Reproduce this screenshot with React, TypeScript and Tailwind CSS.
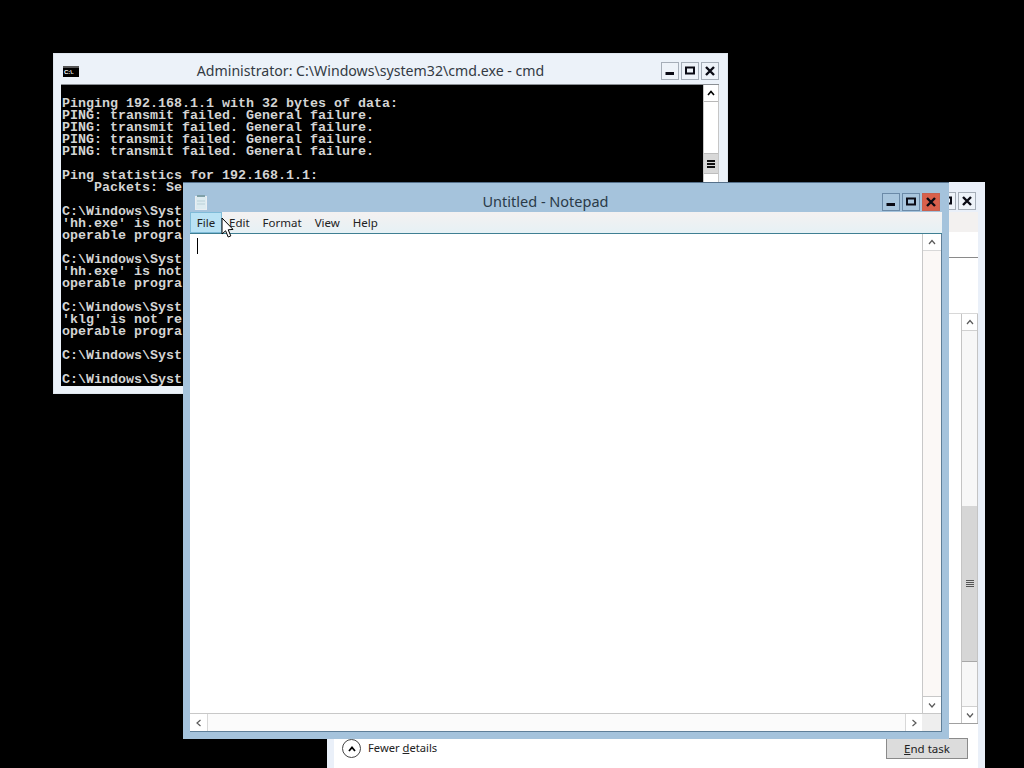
import React from "react";

const CONSOLE_LINES = [
  "Pinging 192.168.1.1 with 32 bytes of data:",
  "PING: transmit failed. General failure.",
  "PING: transmit failed. General failure.",
  "PING: transmit failed. General failure.",
  "PING: transmit failed. General failure.",
  "",
  "Ping statistics for 192.168.1.1:",
  "    Packets: Se",
  "",
  "C:\\Windows\\Syst",
  "'hh.exe' is not",
  "operable progra",
  "",
  "C:\\Windows\\Syst",
  "'hh.exe' is not",
  "operable progra",
  "",
  "C:\\Windows\\Syst",
  "'klg' is not re",
  "operable progra",
  "",
  "C:\\Windows\\Syst",
  "",
  "C:\\Windows\\Syst",
];

function Glyph({ kind, className = "text-[#0a0a14]" }: { kind: "min" | "max" | "close"; className?: string }) {
  return (
    <svg width="12" height="12" viewBox="0 0 12 12" className={className}>
      {kind === "min" && <rect x="1.5" y="7" width="8.5" height="3" fill="currentColor" />}
      {kind === "max" && <rect x="2" y="2.5" width="8" height="6" fill="none" stroke="currentColor" strokeWidth="2" />}
      {kind === "close" && <path d="M2 2 L10 10 M10 2 L2 10" stroke="currentColor" strokeWidth="2.4" fill="none" />}
    </svg>
  );
}

function CaptionButton({ kind, tone }: { kind: "min" | "max" | "close"; tone: "light" | "blue" | "red" }) {
  const toneClass =
    tone === "light"
      ? "border-[#a6aeb8] bg-[#eef3f9]"
      : tone === "blue"
      ? "border-[#6b8aa8] bg-[#a9c6de]"
      : "border-[#c8604f] bg-[#d9604c]";
  return (
    <div className={`flex h-[18px] w-[18px] items-center justify-center border ${toneClass}`}>
      <Glyph kind={kind} />
    </div>
  );
}

function Chevron({ dir, className = "text-[#5a5a5a]", weight = 1.2 }: { dir: "up" | "down" | "left" | "right"; className?: string; weight?: number }) {
  const d = {
    up: "M2 7 L5 3.5 L8 7",
    down: "M2 3.5 L5 7 L8 3.5",
    left: "M6.5 2 L3 5 L6.5 8",
    right: "M3.5 2 L7 5 L3.5 8",
  }[dir];
  return (
    <svg width="10" height="10" viewBox="0 0 10 10" className={className}>
      <path d={d} fill="none" stroke="currentColor" strokeWidth={weight} />
    </svg>
  );
}

function Grip() {
  return (
    <div className="flex flex-col gap-[1px]">
      <div className="h-[1px] w-[8px] bg-current" />
      <div className="h-[1px] w-[8px] bg-current" />
      <div className="h-[1px] w-[8px] bg-current" />
      <div className="h-[1px] w-[8px] bg-current" />
    </div>
  );
}

function HeavyGrip() {
  return (
    <div className="flex flex-col gap-[1px]">
      <div className="h-[2px] w-[8px] bg-[#111]" />
      <div className="h-[2px] w-[8px] bg-[#111]" />
      <div className="h-[2px] w-[8px] bg-[#111]" />
    </div>
  );
}

function CmdWindow() {
  return (
    <div className="absolute left-[53px] top-[53px] flex h-[341px] w-[675px] flex-col border border-[#dfe6ee] bg-[#ecf2f9] pb-[7px] pl-[7px] pr-[8px]">
      <div className="flex h-[30px] shrink-0 items-center pt-[4px]">
        <div className="ml-[2px] flex h-[11px] w-[16px] items-center overflow-hidden border-t-2 border-[#555] bg-black pl-[1px] font-['Liberation_Sans',sans-serif] text-[6px] font-bold leading-none text-white">
          C:\.
        </div>
        <div className="flex-1 pl-[1px] text-center font-['Noto_Sans',sans-serif] text-[14.15px] text-[#333a44]">
          Administrator: C:\Windows\system32\cmd.exe - cmd
        </div>
        <div className="flex gap-[2px]">
          <CaptionButton kind="min" tone="light" />
          <CaptionButton kind="max" tone="light" />
          <CaptionButton kind="close" tone="light" />
        </div>
      </div>
      <div className="flex min-h-0 flex-1 border-t border-[#8b8f94]">
        <div className="min-w-0 flex-1 overflow-hidden bg-black pl-[1px] pt-[13px] font-['Liberation_Mono',monospace] text-[13.33px] font-bold leading-[12px] text-[#d4d4d4]">
          {CONSOLE_LINES.map((line, i) =>
            line ? (
              <div key={i} className="h-[12px] w-fit whitespace-pre">
                {line}
              </div>
            ) : (
              <div key={i} className="h-[12px]" />
            )
          )}
        </div>
        <div className="flex w-[16px] shrink-0 flex-col border-x border-[#c6c6c6] bg-white">
          <div className="flex h-[17px] items-center justify-center border-b border-[#b8b8b8]">
            <Chevron dir="up" className="text-black" weight={1.6} />
          </div>
          <div className="mt-[51px] flex h-[21px] items-center justify-center border-y border-[#bdbdbd] bg-[#d8d8d8]">
            <HeavyGrip />
          </div>
        </div>
      </div>
    </div>
  );
}

function TaskManagerWindow() {
  return (
    <div className="absolute left-[327px] top-[182px] flex h-[586px] w-[658px] flex-col bg-[#eaf0f9] px-[7px] font-['Noto_Sans',sans-serif]">
      <div className="flex h-[30px] shrink-0 justify-end gap-[2px] pr-[2px] pt-[10px]">
        <CaptionButton kind="max" tone="light" />
        <CaptionButton kind="close" tone="light" />
      </div>
      <div className="h-[20px] shrink-0 bg-[#f3f1f0]" />
      <div className="h-[26px] shrink-0 border-b border-[#8a8a8a] bg-white" />
      <div className="flex min-h-0 flex-1 flex-col bg-white">
        <div className="flex min-h-0 flex-1 flex-col border-b border-[#a0a0a0]">
          <div className="h-[56px] shrink-0 border-b border-[#d8d8d8]" />
          <div className="flex min-h-0 flex-1 justify-end">
            <div className="flex w-[17px] flex-col border-x border-[#c4c4c4] bg-[#f7f7f7]">
              <div className="flex h-[17px] items-center justify-center border-b border-[#d0d0d0] bg-white">
                <Chevron dir="up" />
              </div>
              <div className="mt-[175px] flex h-[156px] items-center justify-center border-b border-[#a8a8a8] bg-[#d6d6d6] text-[#555]">
                <Grip />
              </div>
              <div className="flex-1" />
              <div className="flex h-[17px] items-center justify-center border-t border-[#d0d0d0] bg-white">
                <Chevron dir="down" />
              </div>
            </div>
          </div>
        </div>
        <div className="flex h-[44px] shrink-0 items-center justify-between pl-[8px] pr-[10px] pt-[5px]">
          <div className="flex items-center gap-[7px]">
            <div className="flex h-[19px] w-[19px] items-center justify-center rounded-full border border-[#444]">
              <Chevron dir="up" className="text-black" weight={1.8} />
            </div>
            <span className="text-[11.2px] text-[#222]">
              Fewer <span className="underline">d</span>etails
            </span>
          </div>
          <div className="flex h-[21px] w-[82px] items-center justify-center border border-[#8a8a8a] bg-[#dcdcdc] text-[11.5px] text-[#222]">
            <span>
              <span className="underline">E</span>nd task
            </span>
          </div>
        </div>
      </div>
    </div>
  );
}

function NotepadWindow() {
  return (
    <div className="absolute left-[183px] top-[182px] flex h-[557px] w-[766px] flex-col border-t border-[#55708a] bg-[#a5c3dc] pb-[7px] pl-[7px] pr-[7px] font-['Noto_Sans',sans-serif]">
      <div className="flex h-[29px] shrink-0 items-center pt-[8px]">
        <svg width="16" height="16" viewBox="0 0 16 16" className="ml-[3px]">
          <rect x="2.5" y="2.5" width="11" height="13" fill="#dcebf0" stroke="#e9eef2" />
          <rect x="4" y="1" width="8" height="2" fill="#7fa0a8" />
          <path d="M4 7h8M4 10h8" stroke="#b9d0d8" />
        </svg>
        <div className="flex-1 text-center text-[14.5px] text-[#2a3a48]">Untitled - Notepad</div>
        <div className="flex gap-[2px] pr-[2px]">
          <CaptionButton kind="min" tone="blue" />
          <CaptionButton kind="max" tone="blue" />
          <CaptionButton kind="close" tone="red" />
        </div>
      </div>
      <div className="flex h-[22px] shrink-0 items-center border-b border-[#3f7f93] bg-gradient-to-b from-[#f4f1f1] to-[#e6f1f5] text-[11.5px] text-[#222]">
        <div className="flex h-full w-[32px] items-center justify-center border border-[#7fbbd8] bg-[#b9e2f4]">File</div>
        <div className="ml-[7px]">Edit</div>
        <div className="ml-[13px]">Format</div>
        <div className="ml-[13px]">View</div>
        <div className="ml-[13px]">Help</div>
      </div>
      <div className="flex min-h-0 flex-1 flex-col border-b border-r border-[#5f7f99] bg-white">
        <div className="flex min-h-0 flex-1">
          <div className="min-w-0 flex-1 pl-[7px] pt-[4px]">
            <div className="h-[16px] w-[1px] bg-black" />
          </div>
          <div className="flex w-[19px] shrink-0 flex-col border-l border-[#c8c8c8] bg-[#fbf8f6]">
            <div className="flex h-[17px] items-center justify-center border-b border-[#d8d8d8] bg-white">
              <Chevron dir="up" />
            </div>
            <div className="flex-1" />
            <div className="flex h-[17px] items-center justify-center border-t border-[#c8c8c8] bg-white">
              <Chevron dir="down" />
            </div>
          </div>
        </div>
        <div className="flex h-[18px] shrink-0 border-t border-[#c8c8c8]">
          <div className="flex w-[18px] items-center justify-center border-r border-[#d8d8d8]">
            <Chevron dir="left" />
          </div>
          <div className="flex-1 bg-[#fbfbfb]" />
          <div className="flex w-[17px] items-center justify-center border-l border-[#d8d8d8]">
            <Chevron dir="right" />
          </div>
          <div className="w-[19px] bg-[#eeeeee]" />
        </div>
      </div>
    </div>
  );
}

export default function App() {
  return (
    <div className="relative h-[768px] w-[1024px] overflow-hidden bg-black">
      <CmdWindow />
      <TaskManagerWindow />
      <NotepadWindow />
      <svg width="14" height="24" viewBox="0 0 14 24" className="absolute left-[221px] top-[217px]">
        <path
          d="M1 1 L1 17 L4.6 13.8 L7.2 20 L9.8 18.9 L7.2 12.8 L12 12.4 Z"
          fill="#fff"
          stroke="#000"
          strokeWidth="1"
        />
      </svg>
    </div>
  );
}
